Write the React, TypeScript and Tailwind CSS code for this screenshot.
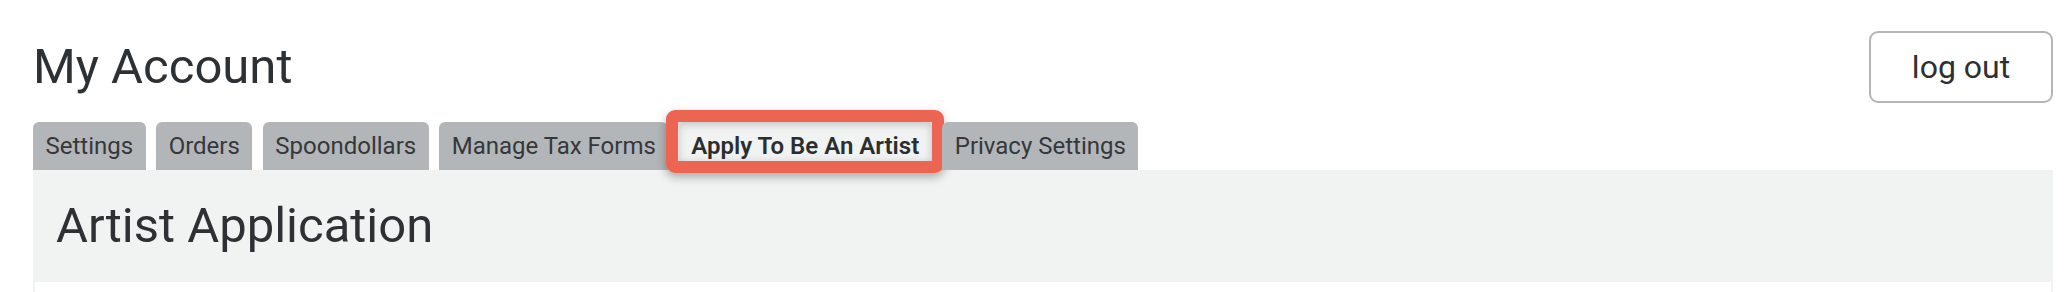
import React from "react";

const tabs = [
  "Settings",
  "Orders",
  "Spoondollars",
  "Manage Tax Forms",
  "Apply To Be An Artist",
  "Privacy Settings",
];

export default function App() {
  return (
    <div className="w-[2068px] h-[292px] overflow-hidden bg-white text-[#2e3133] font-['Roboto','Liberation_Sans',sans-serif]">
      <div className="pl-[33px] pr-[15px] pt-[31px]">
        <div className="flex items-center justify-between h-[72px]">
          <h1 className="text-[49px] leading-[56px] font-normal">My Account</h1>
          <button className="w-[184px] h-[72px] border-2 border-[#b3b6b8] rounded-[9px] text-[32px] leading-[40px] text-[#2e3133] bg-white">
            log out
          </button>
        </div>
        <div className="mt-[19px] flex gap-[10.5px]">
          {tabs.map((t) => {
            const active = t === "Apply To Be An Artist";
            return (
              <div
                key={t}
                className={
                  active
                    ? "relative h-[48px] px-[12.5px] rounded-t-[6px] bg-[#f1f3f2] text-[24px] leading-[48px] font-semibold text-[#2b2e30]"
                    : "relative h-[48px] px-[12.5px] rounded-t-[6px] bg-[#b3b6b8] text-[24px] leading-[48px] text-[#35383b]"
                }
              >
                {t}
                {active && (
                  <div className="absolute left-[-13px] right-[-12px] top-[-12px] bottom-[-3px] border-[12px] border-[#ec6553] rounded-[9px] shadow-[0_4px_10px_rgba(0,0,0,0.3),inset_0_2px_8px_rgba(0,0,0,0.22)]" />
                )}
              </div>
            );
          })}
        </div>
        <div className="border-x-2 border-[#f1f3f2]">
          <div className="h-[112px] bg-[#f1f3f2] flex items-center px-[21px]">
            <h2 className="text-[49px] leading-[56px] font-normal">Artist Application</h2>
          </div>
          <div className="h-[200px] bg-white" />
        </div>
      </div>
    </div>
  );
}
